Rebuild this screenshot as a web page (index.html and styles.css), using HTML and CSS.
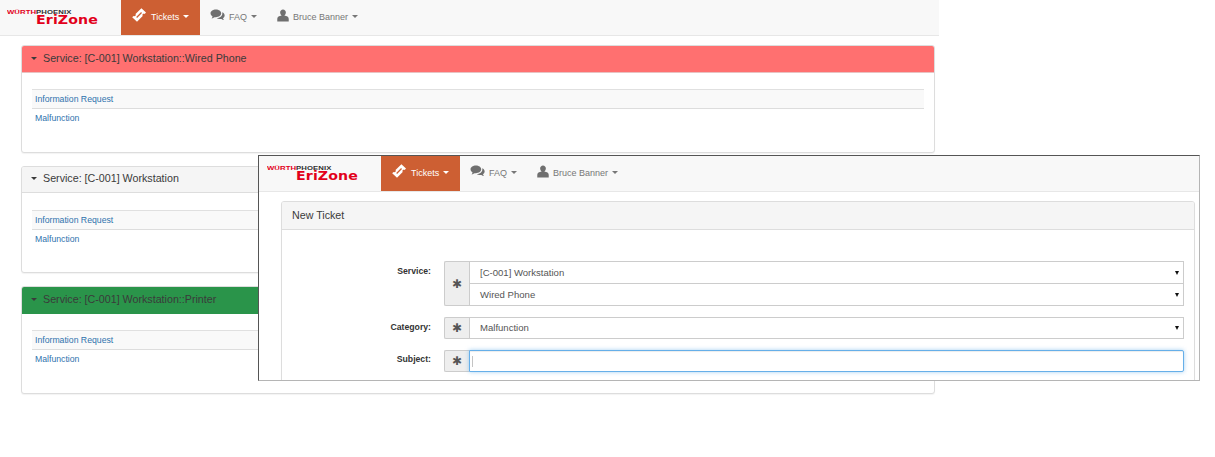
FILE: index.html
```html
<!DOCTYPE html>
<html lang="en">
<head>
<meta charset="utf-8">
<title>EriZone</title>
<link rel="stylesheet" href="styles.css">
</head>
<body>
<svg class="defs" width="0" height="0" aria-hidden="true">
  <symbol id="i-ticket" viewBox="0 0 16 16"><path fill="currentColor" fill-rule="evenodd" d="M10.4 1.2 15 5.6 13.7 6.9C13.1 6.5 12.3 6.6 11.8 7.1 11.3 7.7 11.3 8.4 11.7 9L6 14.8 1.2 10.3 2.5 9C3.1 9.4 3.9 9.3 4.4 8.8 4.9 8.2 4.9 7.4 4.5 6.9ZM10.1 5 5.2 10 6.1 10.9 11 5.9Z"/></symbol>
  <symbol id="i-comments" viewBox="0 0 16 14"><path fill="currentColor" d="M6.3 0.5C9.5 0.5 12 2.3 12 4.7 12 7 9.5 8.9 6.3 8.9 5.8 8.9 5.3 8.9 4.8 8.8 3.8 9.6 2.7 10 1.5 10.1 2.2 9.4 2.6 8.7 2.7 8 1.3 7.2 0.5 6 0.5 4.7 0.5 2.3 3.1 0.5 6.3 0.5Z"/><path fill="currentColor" d="M13 3.6C14.7 4.3 15.7 5.5 15.7 6.9 15.7 8.1 15 9.1 13.9 9.8 14 10.5 14.3 11.2 15 11.9 14 11.8 13 11.4 12.2 10.7 11.7 10.8 11.3 10.9 10.8 10.9 9.4 10.9 8.1 10.4 7.3 9.7 10.6 9.6 13.2 7.5 13.2 4.8 13.2 4.4 13.1 4 13 3.6Z"/></symbol>
  <symbol id="i-user" viewBox="0 0 13 14"><path fill="currentColor" d="M6.5 0.4C8.3 0.4 9.6 1.9 9.6 3.6 9.6 5.1 8.9 6.4 7.9 7.1 10.8 7.5 12.7 8.6 12.7 10.6V13.6H0.3V10.6C0.3 8.6 2.2 7.5 5.1 7.1 4.1 6.4 3.4 5.1 3.4 3.6 3.4 1.9 4.7 0.4 6.5 0.4Z"/></symbol>
</svg>

<div class="app">
  <nav class="navbar">
    <a class="brand"><span class="brand-top"><span class="w">WÜRTH</span>PHOENIX</span><span class="brand-name">EriZone</span></a>
    <a class="nav-item active"><svg class="ic ic-ticket"><use href="#i-ticket"/></svg>Tickets<span class="caret"></span></a>
    <a class="nav-item"><svg class="ic ic-comments"><use href="#i-comments"/></svg>FAQ<span class="caret"></span></a>
    <a class="nav-item"><svg class="ic ic-user"><use href="#i-user"/></svg>Bruce Banner<span class="caret"></span></a>
  </nav>
  <main class="content">
    <section class="panel">
      <h2 class="panel-head danger"><span class="caret"></span>Service: [C-001] Workstation::Wired Phone</h2>
      <div class="panel-body">
        <div class="row striped"><a>Information Request</a></div>
        <div class="row"><a>Malfunction</a></div>
      </div>
    </section>
    <section class="panel">
      <h2 class="panel-head"><span class="caret"></span>Service: [C-001] Workstation</h2>
      <div class="panel-body">
        <div class="row striped"><a>Information Request</a></div>
        <div class="row"><a>Malfunction</a></div>
      </div>
    </section>
    <section class="panel">
      <h2 class="panel-head success"><span class="caret"></span>Service: [C-001] Workstation::Printer</h2>
      <div class="panel-body">
        <div class="row striped"><a>Information Request</a></div>
        <div class="row"><a>Malfunction</a></div>
      </div>
    </section>
  </main>
</div>

<div class="overlay">
  <nav class="navbar">
    <a class="brand"><span class="brand-top"><span class="w">WÜRTH</span>PHOENIX</span><span class="brand-name">EriZone</span></a>
    <a class="nav-item active"><svg class="ic ic-ticket"><use href="#i-ticket"/></svg>Tickets<span class="caret"></span></a>
    <a class="nav-item"><svg class="ic ic-comments"><use href="#i-comments"/></svg>FAQ<span class="caret"></span></a>
    <a class="nav-item"><svg class="ic ic-user"><use href="#i-user"/></svg>Bruce Banner<span class="caret"></span></a>
  </nav>
  <main class="content">
    <section class="panel form-panel">
      <h2 class="panel-head">New Ticket</h2>
      <form class="form">
        <div class="field field-service">
          <label class="label">Service:</label>
          <div class="group">
            <span class="addon">✱</span>
            <div class="stack">
              <div class="select">[C-001] Workstation</div>
              <div class="select">Wired Phone</div>
            </div>
          </div>
        </div>
        <div class="field">
          <label class="label">Category:</label>
          <div class="group">
            <span class="addon">✱</span>
            <div class="stack"><div class="select">Malfunction</div></div>
          </div>
        </div>
        <div class="field field-subject">
          <label class="label">Subject:</label>
          <div class="group">
            <span class="addon">✱</span>
            <div class="stack"><div class="text-input"></div></div>
          </div>
        </div>
      </form>
    </section>
  </main>
</div>
</body>
</html>
```
FILE: styles.css
```css
* { box-sizing: border-box; }
html, body { margin: 0; padding: 0; background: #fff; }
body {
  position: relative;
  height: 457px;
  overflow: hidden;
  font-family: "Liberation Sans", Arial, sans-serif;
  color: #333;
}
.defs { position: absolute; }
.app { width: 939px; }

/* navbar */
.navbar {
  display: flex;
  height: 36px;
  background: #f8f8f8;
  border-bottom: 1px solid #e7e7e7;
}
.brand {
  width: 121px;
  padding: 8.5px 0 0 7px;
  display: flex;
  flex-direction: column;
  flex-shrink: 0;
}
.brand-top {
  display: block;
  font-size: 6.2px;
  line-height: 6px;
  font-weight: 700;
  letter-spacing: 0.05px;
  color: #333;
  white-space: nowrap;
  transform: scaleX(1.25);
  transform-origin: left center;
}
.brand-top .w { color: #e2001a; }
.brand-name {
  display: block;
  margin: 0 0 0 29px;
  font-family: "DejaVu Sans", sans-serif;
  font-size: 11.5px;
  line-height: 10px;
  font-weight: 700;
  letter-spacing: 0.1px;
  color: #e2001a;
  transform: scaleX(1.23);
  transform-origin: left center;
}
.nav-item {
  display: flex;
  align-items: center;
  padding: 0 10px 2px;
  font-size: 9px;
  color: #777;
  white-space: nowrap;
  height: 35px;
}
.nav-item.active {
  width: 79px;
  background: #cd5f33;
  color: #fff;
  font-weight: 400;
}
.ic { flex-shrink: 0; }
.ic-ticket { width: 16px; height: 16px; margin-right: 4px; margin-top: -3px; }
.ic-comments { width: 15px; height: 13px; margin-right: 4px; margin-top: -2px; }
.ic-user { width: 12px; height: 13px; margin-right: 4px; margin-top: -2px; }
.nav-item .ic-comments { color: #6f6f6f; }
.nav-item .ic-user { color: #6f6f6f; }
.active .ic-ticket { color: #fff; }
.caret {
  display: inline-block;
  width: 0;
  height: 0;
  margin-left: 4px;
  border-top: 3px solid currentColor;
  border-left: 3px solid transparent;
  border-right: 3px solid transparent;
}

/* panels */
.content {
  padding: 9px 4px 0 21px;
  display: flex;
  flex-direction: column;
  gap: 13px;
}
.panel {
  height: 107.5px;
  background: #fff;
  border: 1px solid #ddd;
  border-radius: 3px;
  box-shadow: 0 1px 1px rgba(0, 0, 0, .05);
  overflow: hidden;
}
.panel-head {
  display: flex;
  align-items: center;
  height: 26.5px;
  margin: 0;
  padding: 0 10px 2px 9px;
  background: #f5f5f5;
  border-bottom: 1px solid #ddd;
  font-size: 10.7px;
  font-weight: 400;
  color: #3a3a3a;
}
.panel-head .caret { margin: 1px 6px 0 0; }
.panel-head.danger { background: #ff7070; border-bottom-color: #e8c2c2; }
.panel-head.success { background: #2a944a; border-bottom-color: #2a944a; }
.panel-body { padding: 16.5px 10px 0 10px; }
.row {
  height: 18.5px;
  padding: 0 3px;
  display: flex;
  align-items: center;
  font-size: 8.7px;
  color: #2f73ad;
}
.row.striped {
  background: #f9f9f9;
  border-top: 1px solid #e0e0e0;
  border-bottom: 1px solid #ddd;
  height: 20px;
}

/* overlay window */
.overlay {
  position: absolute;
  left: 258px;
  top: 155px;
  width: 942px;
  height: 226px;
  padding-left: 1px;
  background: #fff;
  border: 1px solid #555;
  border-right-color: #b5b5b5;
  border-bottom-color: #b5b5b5;
  overflow: hidden;
}
.overlay .navbar { margin-left: -1px; padding-left: 1px; }
.form-panel { height: 200px; }
.form-panel .panel-head { height: 28px; padding-left: 10px; }
.form { padding: 31px 10px 0 0; display: flex; flex-direction: column; }
.field { display: flex; height: 22.5px; margin-bottom: 10.5px; }
.field-service { height: 45px; }
.label {
  width: 149px;
  padding-top: 5px;
  text-align: right;
  font-size: 8.7px;
  font-weight: 700;
  color: #333;
  flex-shrink: 0;
}
.field-subject .label { padding-top: 4px; }
.group {
  flex: 1;
  margin-left: 13px;
  display: flex;
  min-width: 0;
}
.addon {
  width: 25px;
  display: flex;
  align-items: center;
  justify-content: center;
  background: #eee;
  border: 1px solid #ccc;
  border-right: 0;
  border-radius: 2px 0 0 2px;
  font-family: "DejaVu Sans", sans-serif;
  font-size: 12px;
  font-weight: 700;
  color: #555;
  flex-shrink: 0;
}
.stack { flex: 1; display: flex; flex-direction: column; min-width: 0; }
.select {
  position: relative;
  flex: 1;
  display: flex;
  align-items: center;
  padding-left: 10px;
  border: 1px solid #ccc;
  background: #fff;
  font-size: 9.55px;
  color: #555;
}
.select + .select { margin-top: -1px; }
.select::after {
  content: "";
  position: absolute;
  right: 4px;
  top: 50%;
  margin-top: -2px;
  border-top: 4px solid #111;
  border-left: 2.5px solid transparent;
  border-right: 2.5px solid transparent;
}
.text-input {
  position: relative;
  flex: 1;
  background: #fff;
  border: 1px solid #66afe9;
  border-radius: 0 2px 2px 0;
  box-shadow: inset 0 1px 1px rgba(0, 0, 0, .075), 0 0 4px rgba(102, 175, 233, .6);
}
.text-input::after {
  content: "";
  position: absolute;
  left: 2px;
  top: 5px;
  width: 1px;
  height: 11px;
  background: #c4c4c4;
}
```
